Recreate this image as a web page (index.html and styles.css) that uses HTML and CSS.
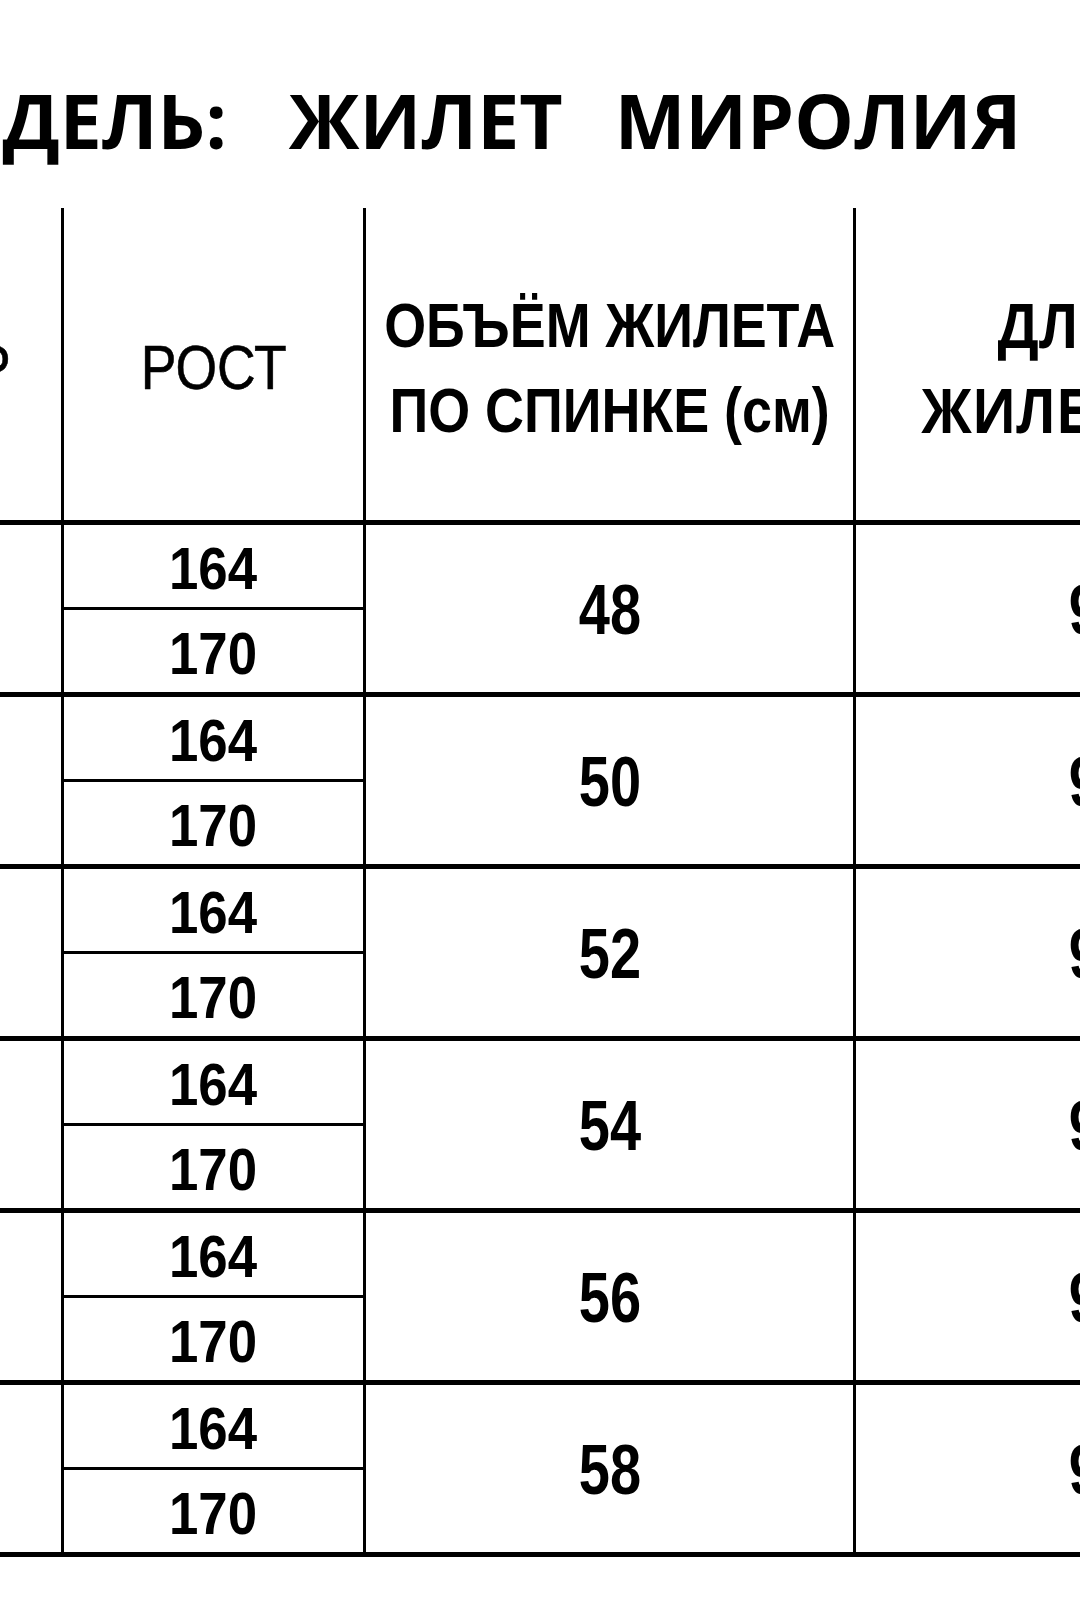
FILE: index.html
```html
<!DOCTYPE html>
<html lang="ru">
<head>
<meta charset="utf-8">
<title>Модель: жилет Миролия</title>
<link rel="stylesheet" href="styles.css">
</head>
<body>
<div class="page">
  <h1 class="title"><span class="word first">МОДЕЛЬ:</span><span class="word second">ЖИЛЕТ</span><span class="word">МИРОЛИЯ</span></h1>
  <div class="table">
    <div class="row head">
      <div class="cell c1 size-head"><span class="t narrow right">РАЗМЕР</span></div>
      <div class="cell c2"><span class="t narrow">РОСТ</span></div>
      <div class="cell c3"><span class="t narrow-bold multi">ОБЪЁМ ЖИЛЕТА<br>ПО СПИНКЕ (см)</span></div>
      <div class="cell c4"><span class="t sans-bold multi">ДЛИНА<br>ЖИЛЕТА (см)</span></div>
    </div>
    <div class="row group">
      <div class="cell c1"></div>
      <div class="cell c2 split"><div class="sub"><span class="t num">164</span></div><div class="sub"><span class="t num">170</span></div></div>
      <div class="cell c3 val"><span class="t big">48</span></div>
      <div class="cell c4 val"><span class="t big">90</span></div>
    </div>
    <div class="row group">
      <div class="cell c1"></div>
      <div class="cell c2 split"><div class="sub"><span class="t num">164</span></div><div class="sub"><span class="t num">170</span></div></div>
      <div class="cell c3 val"><span class="t big">50</span></div>
      <div class="cell c4 val"><span class="t big">91</span></div>
    </div>
    <div class="row group">
      <div class="cell c1"></div>
      <div class="cell c2 split"><div class="sub"><span class="t num">164</span></div><div class="sub"><span class="t num">170</span></div></div>
      <div class="cell c3 val"><span class="t big">52</span></div>
      <div class="cell c4 val"><span class="t big">92</span></div>
    </div>
    <div class="row group">
      <div class="cell c1"></div>
      <div class="cell c2 split"><div class="sub"><span class="t num">164</span></div><div class="sub"><span class="t num">170</span></div></div>
      <div class="cell c3 val"><span class="t big">54</span></div>
      <div class="cell c4 val"><span class="t big">93</span></div>
    </div>
    <div class="row group">
      <div class="cell c1"></div>
      <div class="cell c2 split"><div class="sub"><span class="t num">164</span></div><div class="sub"><span class="t num">170</span></div></div>
      <div class="cell c3 val"><span class="t big">56</span></div>
      <div class="cell c4 val"><span class="t big">94</span></div>
    </div>
    <div class="row group last">
      <div class="cell c1"></div>
      <div class="cell c2 split"><div class="sub"><span class="t num">164</span></div><div class="sub"><span class="t num">170</span></div></div>
      <div class="cell c3 val"><span class="t big">58</span></div>
      <div class="cell c4 val"><span class="t big">95</span></div>
    </div>
  </div>
</div>
</body>
</html>
```
FILE: styles.css
```css
html, body {
  margin: 0;
  padding: 0;
  background: #ffffff;
  overflow: hidden;
}

.page {
  width: 1080px;
  height: 1620px;
  overflow: hidden;
  color: #000;
}

.title {
  margin: 0;
  padding-top: 83px;
  height: 75px;
  display: flex;
  gap: 52px;
  white-space: nowrap;
  font-family: "Open Sans", "Noto Sans", sans-serif;
  font-weight: 700;
  font-size: 75px;
  line-height: 75px;
}

.title .word {
  flex-shrink: 0;
}

.title .first {
  margin-left: -128px;
  margin-right: 10px;
}

.table {
  margin-top: 50px;
  margin-left: -271px;
  width: 1620px;
}

.row {
  display: flex;
  box-sizing: border-box;
}

.head {
  height: 312px;
}

.group {
  height: 172px;
  border-top: 5px solid #000;
}

.group.last {
  height: 177px;
  border-bottom: 5px solid #000;
}

.cell {
  box-sizing: border-box;
  flex-shrink: 0;
  display: flex;
  align-items: center;
  justify-content: center;
  text-align: center;
}

.head .cell {
  padding-top: 7px;
}

.head .size-head {
  justify-content: flex-end;
  padding-right: 50px;
}

.c1 { width: 332px; }
.c2 { width: 302px; border-left: 3px solid #000; }
.c3 { width: 490px; border-left: 3px solid #000; }
.c4 { width: 490px; border-left: 3px solid #000; }

.split {
  flex-direction: column;
  align-items: stretch;
}

.sub {
  box-sizing: border-box;
  height: 82px;
  display: flex;
  align-items: center;
  justify-content: center;
  padding-top: 5px;
}

.sub + .sub {
  height: 85px;
  border-top: 3px solid #000;
}

.val {
  padding-top: 3px;
}

.t {
  display: inline-block;
  white-space: nowrap;
  transform-origin: center;
  line-height: 1;
}

.t.right {
  transform-origin: right center;
}

.narrow {
  font-family: "Liberation Sans", Arial, sans-serif;
  font-weight: 400;
  font-size: 63px;
  transform: scaleX(0.85);
  -webkit-text-stroke: 0.6px #000;
}

.narrow-bold {
  font-family: "Liberation Sans", Arial, sans-serif;
  font-weight: 700;
  font-size: 63px;
  transform: scaleX(0.855);
}

.sans-bold {
  font-family: "Open Sans", "Noto Sans", sans-serif;
  font-weight: 700;
  font-size: 61px;
  transform: scaleX(0.88);
}

.multi {
  line-height: 84.5px;
}

.num {
  font-family: "Liberation Sans", Arial, sans-serif;
  font-weight: 700;
  font-size: 60px;
  transform: scaleX(0.88);
}

.big {
  font-family: "Liberation Sans", Arial, sans-serif;
  font-weight: 700;
  font-size: 70px;
  transform: scaleX(0.8);
}
```
